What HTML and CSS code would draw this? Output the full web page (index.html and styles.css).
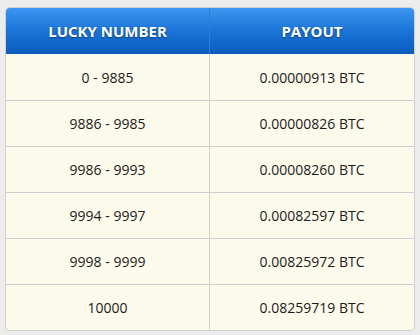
FILE: index.html
```html
<!DOCTYPE html>
<html>
<head>
<meta charset="utf-8">
<link rel="stylesheet" href="styles.css">
</head>
<body>
<div class="wrap">
<table class="payout">
<thead>
<tr><th>Lucky Number</th><th>Payout</th></tr>
</thead>
<tbody>
<tr><td>0 - 9885</td><td>0.00000913 BTC</td></tr>
<tr><td>9886 - 9985</td><td>0.00000826 BTC</td></tr>
<tr><td>9986 - 9993</td><td>0.00008260 BTC</td></tr>
<tr><td>9994 - 9997</td><td>0.00082597 BTC</td></tr>
<tr><td>9998 - 9999</td><td>0.00825972 BTC</td></tr>
<tr><td>10000</td><td>0.08259719 BTC</td></tr>
</tbody>
</table>
</div>
</body>
</html>
```
FILE: styles.css
```css
html, body {
  margin: 0;
  padding: 0;
  background: #ececec;
}
.wrap {
  padding: 7px 5px 0 5px;
}
.payout {
  width: 410px;
  border-collapse: separate;
  border-spacing: 0;
  border: 1px solid #cfcfcf;
  border-radius: 5px;
  overflow: hidden;
  font-family: "Open Sans", "DejaVu Sans", sans-serif;
  font-size: 14px;
  background: #fcfaeb;
  table-layout: fixed;
}
.payout th {
  height: 46px;
  padding: 0;
  color: #fff;
  font-weight: 700;
  font-size: 15px;
  text-transform: uppercase;
  text-shadow: 0 1px 2px rgba(0,0,0,0.45);
  background: linear-gradient(to bottom, #3b97f0 0%, #1a74d8 50%, #0a5cbc 100%);
  border-left: 1px solid #2b7fd8;
}
.payout th:first-child,
.payout td:first-child {
  border-left: none;
  width: 203px;
}
.payout td {
  height: 45px;
  padding: 0;
  text-align: center;
  color: #1c1c1c;
  border-top: 1px solid #cfcfcf;
  border-left: 1px solid #cfcfcf;
}
.payout tbody tr:first-child td {
  border-top: none;
  height: 46px;
}
```
